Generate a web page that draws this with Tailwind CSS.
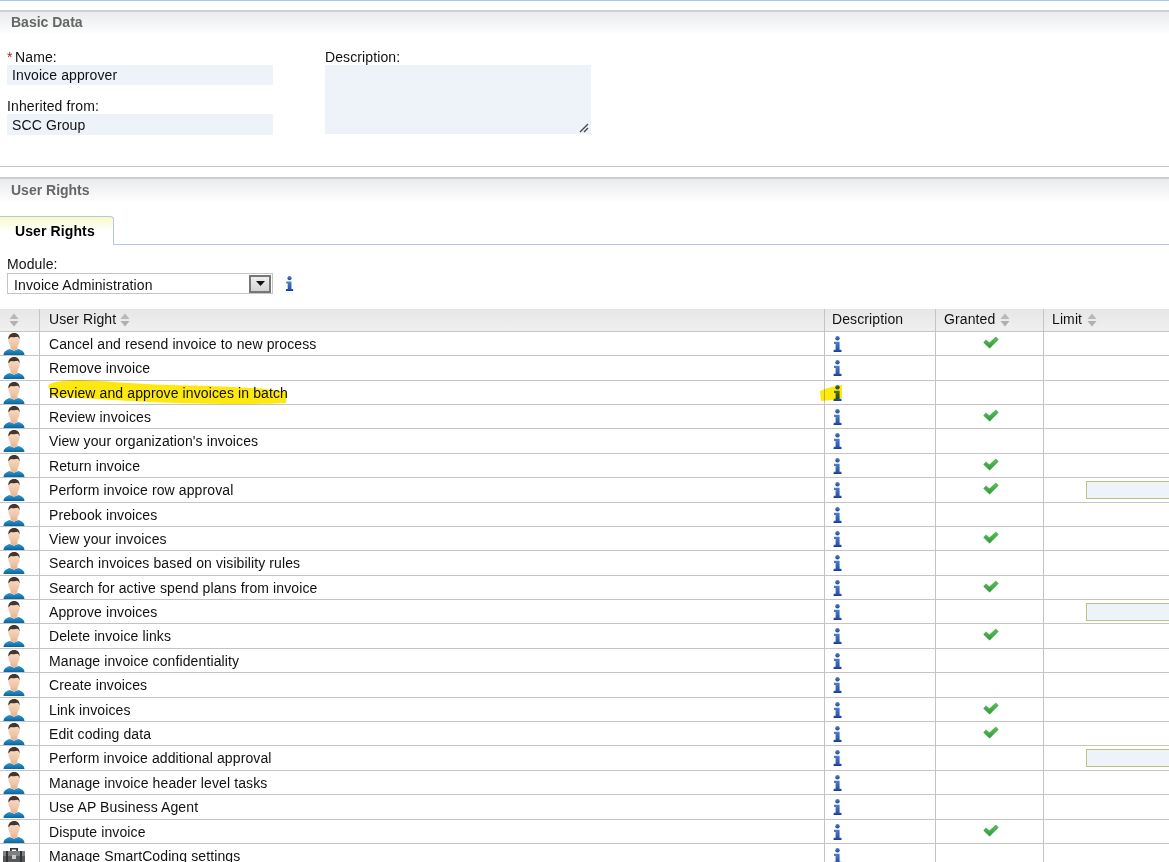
<!DOCTYPE html>
<html>
<head>
<meta charset="utf-8">
<script src="https://cdn.jsdelivr.net/npm/@tailwindcss/browser@4"></script>
<title>User Rights</title>
</head>
<body class="bg-white overflow-hidden h-[862px] font-['Liberation_Sans',Arial,sans-serif] text-[14px] tracking-[0.11px] text-[#111]">

<!-- shared icons -->
<svg class="absolute w-0 h-0">
  <defs>
    <linearGradient id="g-skin" x1="0" y1="0" x2="0" y2="1"><stop offset="0" stop-color="#f8dfca"/><stop offset="1" stop-color="#eebf9e"/></linearGradient>
    <linearGradient id="g-shirt" x1="0" y1="0" x2="0" y2="1"><stop offset="0" stop-color="#2a9ad2"/><stop offset="1" stop-color="#0d639d"/></linearGradient>
    <linearGradient id="g-info" x1="0" y1="0" x2="0" y2="1"><stop offset="0" stop-color="#4f7fd0"/><stop offset="1" stop-color="#1f47a0"/></linearGradient>
    <linearGradient id="g-check" x1="0" y1="0" x2="0" y2="1"><stop offset="0" stop-color="#5cc25a"/><stop offset="1" stop-color="#2f9a3a"/></linearGradient>
  </defs>
  <symbol id="i-info" viewBox="0 0 9 16">
    <circle cx="4.500" cy="2.300" r="2.200" fill="url(#g-info)"/>
    <path d="M1 5.800h5.600v8h1.700V16H0.700v-2.200h1.900V8H1z" fill="url(#g-info)"/>
    <path d="M8.300 14v2H0.700v-.8h7z" fill="#1c3c8c"/>
  </symbol>
  <symbol id="i-check" viewBox="0 0 16 13">
    <path d="M0.300 6.500 3 3.500 6.400 6.500 12.900 0.500 15.700 3.400 6.600 12.600z" fill="url(#g-check)"/>
  </symbol>
  <symbol id="i-sort" viewBox="0 0 10 14">
    <path d="M5 0.500 9.500 6H0.500z" fill="#b8b8b8"/>
    <path d="M0.500 8h9L5 13.500z" fill="#b0b0b0"/>
  </symbol>
  <symbol id="i-user" viewBox="0 0 22 22">
    <path d="M0.500 22c.2-3 1.800-4.400 6-6l4.500 1.500 4.500-1.500c4.200 1.600 5.800 3 6 6z" fill="url(#g-shirt)"/>
    <path d="M7.500 11h7v5l-3.500 2-3.500-2z" fill="#e9b998"/>
    <ellipse cx="11" cy="7.500" rx="5.600" ry="6.600" fill="url(#g-skin)"/>
    <path d="M5.400 6.500C5 2.500 7.500 0 11.200 0c3.600 0 5.800 2.400 5.400 6.500-.4-1.300-1-2.200-1.900-2.700-2 .5-4.600.5-6.800.1-.9.600-1.500 1.400-2.500 2.600z" fill="#46352b"/>
  </symbol>
  <symbol id="i-case" viewBox="0 0 22 20">
    <path d="M7 5V2h8v3h-1.800V3.600H8.800V5z" fill="#333"/>
    <rect x="0" y="5" width="22" height="15" rx="1.500" fill="#55595c"/>
    <rect x="0" y="5" width="22" height="5" fill="#7b8083"/>
    <rect x="9" y="9" width="4" height="4" fill="#c9c9c9"/>
    <rect x="3" y="5" width="2" height="15" fill="#333"/>
    <rect x="17" y="5" width="2" height="15" fill="#333"/>
  </symbol>
</svg>

<div class="h-[10px] border-t border-[#a9cbe9]"></div>

<!-- Basic Data -->
<div class="h-[25px] border-t-2 border-[#cfcfcf] bg-gradient-to-b from-[#e9ebed] to-white pl-[11px] pt-[1px] font-bold text-[14px] tracking-normal leading-[18px] text-[#666]">Basic Data</div>

<div class="h-[132px] border-b border-[#c4c4c4] flex pl-[7px] pt-[13px]">
  <div class="w-[266px]">
    <div class="h-[17px] leading-[19px]"><span class="text-[#b02020] mr-[-1.5px]">*</span> Name:</div>
    <div class="h-[20px] bg-[#eef3fa] pl-[5px] leading-[20px]">Invoice approver</div>
    <div class="h-[17px] mt-[12px] leading-[19px]">Inherited from:</div>
    <div class="h-[21px] bg-[#eef3fa] pl-[5px] leading-[23px]">SCC Group</div>
  </div>
  <div class="w-[266px] ml-[52px]">
    <div class="h-[17px] leading-[19px]">Description:</div>
    <div class="relative h-[69px] bg-[#eef3fa]">
      <svg class="absolute right-[2px] bottom-[1px] w-[10px] h-[10px]" viewBox="0 0 10 10"><path d="M1 9 9 1M5 9 9 5" stroke="#444" stroke-width="1.300" fill="none"/></svg>
    </div>
  </div>
</div>

<div class="h-[10px]"></div>

<!-- User Rights -->
<div class="h-[26px] border-t-2 border-[#cfcfcf] bg-gradient-to-b from-[#e9ebed] to-white pl-[11px] pt-[2px] font-bold text-[14px] tracking-normal leading-[18px] text-[#666]">User Rights</div>

<div class="h-[13px]"></div>
<div class="h-[29px] border-b border-[#b4c6e2] flex">
  <div class="w-[114px] h-[29px] rounded-tr-[4px] border-t border-r border-[#b4c6e2] bg-gradient-to-b from-[#f6f9c8] via-white to-white pl-[15px] pt-[4px] font-bold leading-[20px] text-black">User Rights</div>
</div>

<div class="pl-[7px] pt-[11px] h-[64px]">
  <div class="h-[16px] leading-[16px]">Module:</div>
  <div class="flex items-center h-[21px] mt-[1px]">
    <div class="w-[266px] h-[21px] border border-[#c4c4c4] flex items-center justify-between pl-[6px] pr-[1px]">
      <span class="pt-[3px]">Invoice Administration</span>
      <span class="w-[22px] h-[18px] border-2 border-[#777] bg-gradient-to-b from-[#eeeeee] to-[#d4d4d4] flex items-center justify-center">
        <svg class="w-[9px] h-[5px]" viewBox="0 0 9 5"><path d="M0 0h9L4.500 5z" fill="#111"/></svg>
      </span>
    </div>
    <svg class="w-[9px] h-[15px] ml-[12px] blur-[0.3px]"><use href="#i-info"/></svg>
  </div>
</div>

<!-- table -->
<div class="flex h-[22.8px] bg-gradient-to-b from-[#e6e6e6] to-[#f0f0f0] border-b border-[#c4c4c4]">
  <div class="w-[40px] border-r border-[#c4c4c4] flex items-center pl-[9px]"><svg class="w-[10px] h-[14px]"><use href="#i-sort"/></svg></div>
  <div class="w-[785px] border-r border-[#c4c4c4] flex items-center pl-[9px] gap-[4px]">User Right <svg class="w-[10px] h-[14px]"><use href="#i-sort"/></svg></div>
  <div class="w-[111px] border-r border-[#c4c4c4] flex items-center pl-[7px]">Description</div>
  <div class="w-[108px] border-r border-[#c4c4c4] flex items-center pl-[8px] gap-[5px]">Granted <svg class="w-[10px] h-[14px]"><use href="#i-sort"/></svg></div>
  <div class="flex-1 flex items-center pl-[8px] gap-[5px]">Limit <svg class="w-[10px] h-[14px]"><use href="#i-sort"/></svg></div>
</div>
<div id="rows" class="relative"></div>

<script>
// name, granted, has limit field, icon
const rights = [
  ["Cancel and resend invoice to new process", 1, 0],
  ["Remove invoice", 0, 0],
  ["Review and approve invoices in batch", 0, 0],
  ["Review invoices", 1, 0],
  ["View your organization's invoices", 0, 0],
  ["Return invoice", 1, 0],
  ["Perform invoice row approval", 1, 1],
  ["Prebook invoices", 0, 0],
  ["View your invoices", 1, 0],
  ["Search invoices based on visibility rules", 0, 0],
  ["Search for active spend plans from invoice", 1, 0],
  ["Approve invoices", 0, 1],
  ["Delete invoice links", 1, 0],
  ["Manage invoice confidentiality", 0, 0],
  ["Create invoices", 0, 0],
  ["Link invoices", 1, 0],
  ["Edit coding data", 1, 0],
  ["Perform invoice additional approval", 0, 1],
  ["Manage invoice header level tasks", 0, 0],
  ["Use AP Business Agent", 0, 0],
  ["Dispute invoice", 1, 0],
  ["Manage SmartCoding settings", 0, 0, "i-case"],
];

let html = "";
for (const [name, granted, limit, icon] of rights) {
  html += `<div class="flex h-[24.4px] border-b border-[#c4c4c4]">
    <div class="w-[40px] border-r border-[#c4c4c4] pl-[3px] pt-[1px]"><svg class="w-[22px] h-[22px] blur-[0.3px]"><use href="#${icon || "i-user"}"/></svg></div>
    <div class="w-[785px] border-r border-[#c4c4c4] pl-[9px] leading-[24px]">${name}</div>
    <div class="w-[111px] border-r border-[#c4c4c4] pl-[8px] pt-[4px]"><svg class="w-[9px] h-[16px] blur-[0.3px]"><use href="#i-info"/></svg></div>
    <div class="w-[108px] border-r border-[#c4c4c4] flex justify-center pt-[4px] pl-[2px]">${granted ? '<svg class="w-[16px] h-[13px]"><use href="#i-check"/></svg>' : ""}</div>
    <div class="flex-1 pl-[42px] pt-[3px] overflow-hidden">${limit ? '<div class="w-[100px] h-[18px] border border-[#b8c47f] bg-[#eef3fa]"></div>' : ""}</div>
  </div>`;
}
// marker strokes drawn over the third row
html += `<svg class="absolute left-[46px] top-[46px] w-[244px] h-[28px] mix-blend-multiply blur-[0.5px]" viewBox="46 378 244 28"><path d="M48 386C50 382 60 381 75 380 100 380 130 384 170 385 210 386 260 387 287 392L286 403C250 405 180 404 130 401 100 399 70 398 52 396Z" fill="#fde910"/></svg>
<svg class="absolute left-[818px] top-[52px] w-[26px] h-[20px] mix-blend-multiply blur-[0.5px]" viewBox="818 384 26 20"><path d="M820 391C826 388 835 386 842 385L842 398C836 400 828 400 821 401Z" fill="#fde910"/></svg>`;
document.getElementById("rows").innerHTML = html;
</script>
</body>
</html>
